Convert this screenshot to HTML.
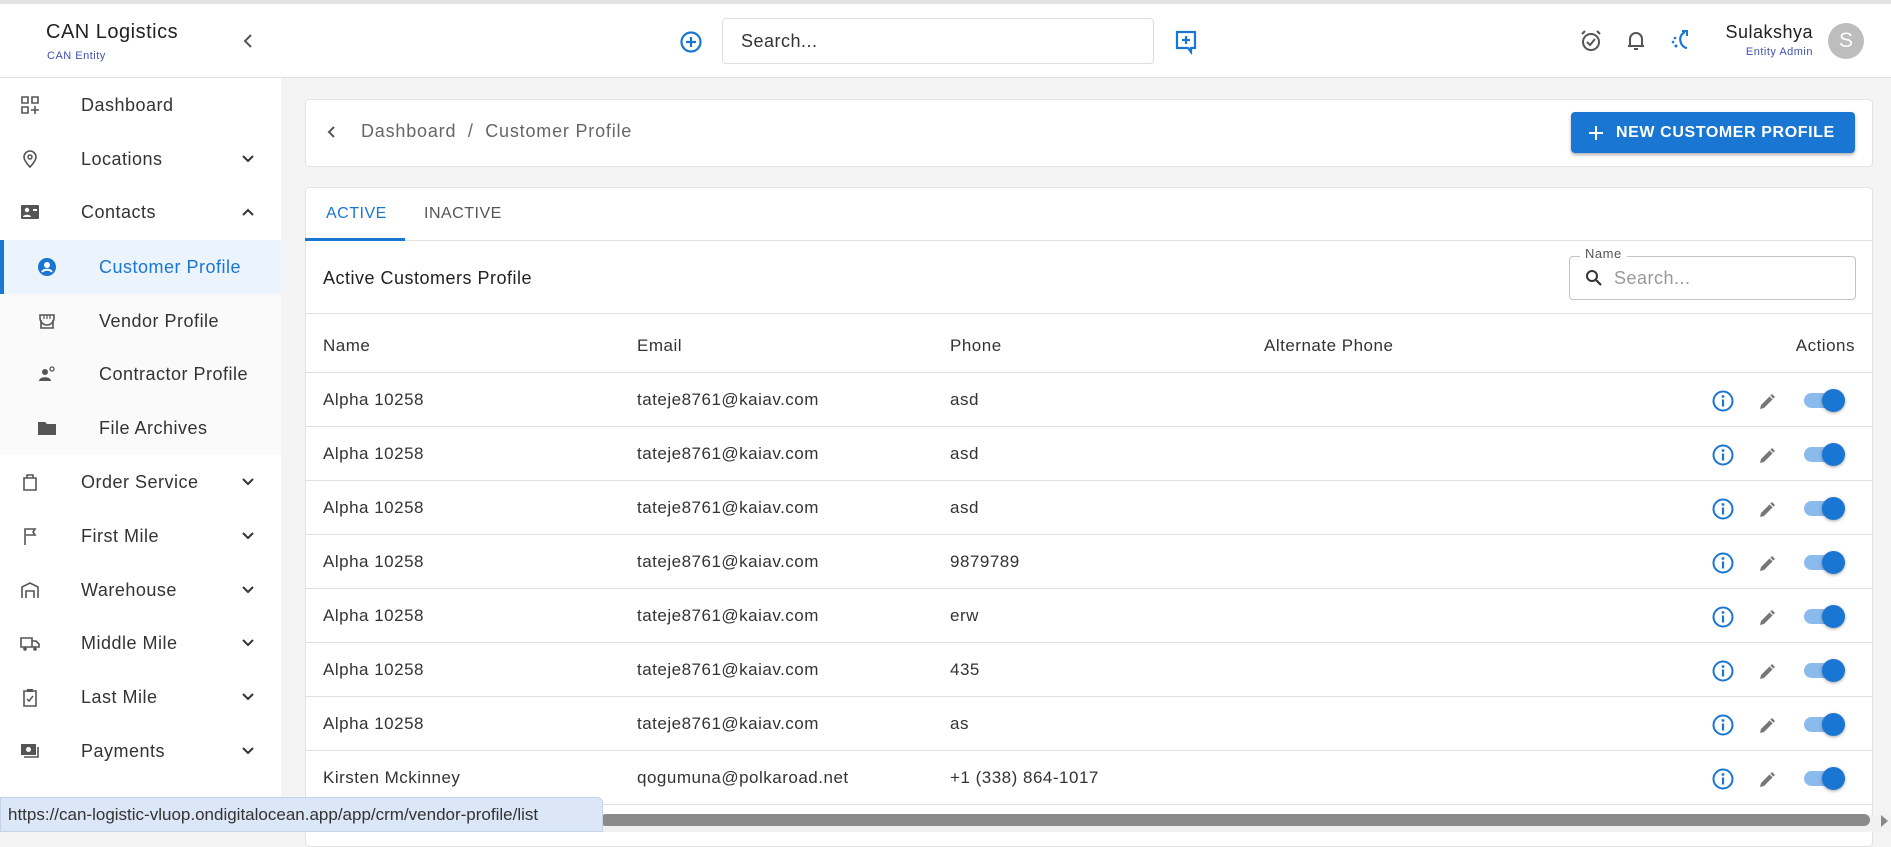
<!DOCTYPE html>
<html><head><meta charset="utf-8"><style>
*{box-sizing:border-box;margin:0;padding:0}
body{width:1891px;height:832px;overflow:hidden;background:#f4f4f4;font-family:"Liberation Sans",sans-serif;color:#222;position:relative;letter-spacing:0.5px}
.a{position:absolute}
.hdr{left:0;top:0;width:1891px;height:78px;background:#fff;border-top:4px solid #e3e3e3;border-bottom:1px solid #e0e0e0}
.side{left:0;top:78px;width:281px;height:754px;background:#fff}
.it{position:absolute;left:0;width:281px;height:54px;font-size:18px;color:#333;display:flex;align-items:center}
.it .ic{position:absolute;left:20px;top:17px;width:20px;height:20px}
.it .tx{position:absolute;left:81px}
.it.sub{background:#fafafa}
.it.sub .ic{left:37px}
.it.sub .tx{left:99px}
.it .ch{position:absolute;left:240px;top:19px}
.card{background:#fff;border:1px solid #e2e2e2;border-radius:4px}
.row{position:absolute;left:305px;width:1568px;border-bottom:1px solid #e0e0e0;height:54px;font-size:17px;color:#333}
.row span{position:absolute;top:17px}
</style></head><body>
<div class="a hdr"></div>
<div class="a" style="left:46px;top:21px;font-size:20px;color:#222">CAN Logistics</div>
<div class="a" style="left:47px;top:50px;font-size:11px;color:#3f51b5">CAN Entity</div>
<svg class="a" style="left:242px;top:33px" width="14" height="16"><path d="M9 2 L3 8 L9 14" stroke="#555" stroke-width="2" fill="none"/></svg>
<svg class="a" style="left:679px;top:30px" width="24" height="24"><circle cx="12" cy="12" r="9.5" stroke="#1976d2" stroke-width="2.2" fill="none"/><path d="M12 7v10M7 12h10" stroke="#1976d2" stroke-width="2.2"/></svg>
<div class="a" style="left:722px;top:18px;width:432px;height:46px;border:1px solid #ddd;border-radius:4px;font-size:18px;color:#333;padding:12px 0 0 18px">Search...</div>
<svg class="a" style="left:1174px;top:29px" width="24" height="26"><path d="M3 3h18v16h-4v4l-3-4H3z" stroke="#1976d2" stroke-width="2.2" fill="none"/><path d="M12 7v8M8 11h8" stroke="#1976d2" stroke-width="2.2"/></svg>
<svg class="a" style="left:1579px;top:29px" width="24" height="24"><circle cx="12" cy="13" r="8" stroke="#555" stroke-width="2" fill="none"/><path d="M8 13l3 3 5-6M3 5l3-3M21 5l-3-3" stroke="#555" stroke-width="2" fill="none"/></svg>
<svg class="a" style="left:1625px;top:29px" width="22" height="24"><path d="M5 17V10a6 6 0 0 1 12 0v7M3 17h16M9 20h4" stroke="#555" stroke-width="2" fill="none"/></svg>
<svg class="a" style="left:1668px;top:28px" width="24" height="26"><path d="M17 4c-4 2-6 6-4 11 1 3 4 5 6 5" stroke="#1976d2" stroke-width="2.2" fill="none"/><path d="M14 3h5v5" stroke="#1976d2" stroke-width="2" fill="none"/><circle cx="7" cy="10" r="1.3" fill="#1976d2"/><circle cx="5" cy="14" r="1.3" fill="#1976d2"/><circle cx="8" cy="18" r="1.5" fill="#1976d2"/></svg>
<div class="a" style="left:1690px;top:22px;width:123px;text-align:right;font-size:18px;color:#222">Sulakshya</div>
<div class="a" style="left:1690px;top:46px;width:123px;text-align:right;font-size:11px;color:#3f51b5">Entity Admin</div>
<div class="a" style="left:1828px;top:23px;width:36px;height:36px;border-radius:50%;background:#bdbdbd;color:#fff;font-size:21px;text-align:center;line-height:36px;letter-spacing:0">S</div>

<div class="a side">
<div class="it" style="top:0"><svg class="ic" viewBox="0 0 20 20"><path d="M2 2h6v6H2zM12 2h6v6h-6zM2 12h6v6H2z" stroke="#555" stroke-width="1.6" fill="none"/><path d="M15 11v8M11 15h8" stroke="#555" stroke-width="1.6"/></svg><span class="tx">Dashboard</span></div>
<div class="it" style="top:54px"><svg class="ic" viewBox="0 0 20 20"><path d="M10 18s-6-6-6-10a6 6 0 0 1 12 0c0 4-6 10-6 10z" stroke="#555" stroke-width="1.6" fill="none"/><circle cx="10" cy="8" r="2" stroke="#555" stroke-width="1.5" fill="none"/></svg><span class="tx">Locations</span><svg class="ch" width="16" height="16"><path d="M3 5l5 5 5-5" stroke="#333" stroke-width="2" fill="none"/></svg></div>
<div class="it" style="top:107px"><svg class="ic" viewBox="0 0 20 20"><rect x="1" y="3" width="18" height="14" rx="1" fill="#555"/><circle cx="7" cy="8" r="2.2" fill="#fff"/><path d="M3 15c0-3 8-3 8 0z" fill="#fff"/><path d="M13 7h4v2h-4z" fill="#fff"/></svg><span class="tx">Contacts</span><svg class="ch" width="16" height="16"><path d="M3 11l5-5 5 5" stroke="#333" stroke-width="2" fill="none"/></svg></div>
<div class="it sub" style="top:162px;background:#ebf3fd;border-left:4px solid #1976d2"><svg class="ic" viewBox="0 0 20 20" style="left:33px"><circle cx="10" cy="10" r="9" fill="#1976d2"/><circle cx="10" cy="8" r="3" fill="#fff"/><path d="M5 15c2-3 8-3 10 0" stroke="#fff" stroke-width="2" fill="none"/></svg><span class="tx" style="left:95px;color:#1976d2">Customer Profile</span></div>
<div class="it sub" style="top:216px"><svg class="ic" viewBox="0 0 20 20"><path d="M3 4h14v3a2 2 0 0 1-14 0zM4 9v8h12V9" stroke="#555" stroke-width="1.6" fill="none"/><path d="M7 4v4M10 4v4M13 4v4" stroke="#555" stroke-width="1.2"/></svg><span class="tx">Vendor Profile</span></div>
<div class="it sub" style="top:269px"><svg class="ic" viewBox="0 0 20 20"><circle cx="8" cy="8" r="3" fill="#555"/><path d="M2 17c0-5 12-5 12 0z" fill="#555"/><circle cx="15" cy="5" r="2" stroke="#555" stroke-width="1.3" fill="none"/></svg><span class="tx">Contractor Profile</span></div>
<div class="it sub" style="top:323px"><svg class="ic" viewBox="0 0 20 20"><path d="M1 4h7l2 2h9v11H1z" fill="#555"/></svg><span class="tx">File Archives</span></div>
<div class="it" style="top:377px"><svg class="ic" viewBox="0 0 20 20"><path d="M4 6h12v12H4zM7 6V3h6v3" stroke="#555" stroke-width="1.6" fill="none"/></svg><span class="tx">Order Service</span><svg class="ch" width="16" height="16"><path d="M3 5l5 5 5-5" stroke="#333" stroke-width="2" fill="none"/></svg></div>
<div class="it" style="top:431px"><svg class="ic" viewBox="0 0 20 20"><path d="M5 19V3h10l-2 3 2 3H6" stroke="#555" stroke-width="1.6" fill="none"/></svg><span class="tx">First Mile</span><svg class="ch" width="16" height="16"><path d="M3 5l5 5 5-5" stroke="#333" stroke-width="2" fill="none"/></svg></div>
<div class="it" style="top:485px"><svg class="ic" viewBox="0 0 20 20"><path d="M2 18V7l8-4 8 4v11M6 18v-7h8v7" stroke="#555" stroke-width="1.6" fill="none"/></svg><span class="tx">Warehouse</span><svg class="ch" width="16" height="16"><path d="M3 5l5 5 5-5" stroke="#333" stroke-width="2" fill="none"/></svg></div>
<div class="it" style="top:538px"><svg class="ic" viewBox="0 0 20 20"><path d="M1 5h11v9H1zM12 8h4l3 3v3h-7" stroke="#555" stroke-width="1.6" fill="none"/><circle cx="5" cy="16" r="1.8" fill="#555"/><circle cx="15" cy="16" r="1.8" fill="#555"/></svg><span class="tx">Middle Mile</span><svg class="ch" width="16" height="16"><path d="M3 5l5 5 5-5" stroke="#333" stroke-width="2" fill="none"/></svg></div>
<div class="it" style="top:592px"><svg class="ic" viewBox="0 0 20 20"><path d="M4 4h12v15H4z" stroke="#555" stroke-width="1.6" fill="none"/><path d="M7 2h6v3H7z" fill="#555"/><path d="M7 12l2 2 4-5" stroke="#555" stroke-width="1.5" fill="none"/></svg><span class="tx">Last Mile</span><svg class="ch" width="16" height="16"><path d="M3 5l5 5 5-5" stroke="#333" stroke-width="2" fill="none"/></svg></div>
<div class="it" style="top:646px"><svg class="ic" viewBox="0 0 20 20"><rect x="1" y="3" width="15" height="11" fill="#555"/><circle cx="8.5" cy="8.5" r="2.5" fill="#fff"/><path d="M18 6v10H4" stroke="#555" stroke-width="1.6" fill="none"/></svg><span class="tx">Payments</span><svg class="ch" width="16" height="16"><path d="M3 5l5 5 5-5" stroke="#333" stroke-width="2" fill="none"/></svg></div>
</div>

<div class="a card" style="left:305px;top:99px;width:1568px;height:68px"></div>
<svg class="a" style="left:326px;top:124px" width="12" height="16"><path d="M8 3L3 8l5 5" stroke="#555" stroke-width="2" fill="none"/></svg>
<div class="a" style="left:361px;top:121px;font-size:18px;color:#666;letter-spacing:0.8px">Dashboard &nbsp;/ &nbsp;Customer Profile</div>
<div class="a" style="left:1571px;top:112px;width:284px;height:41px;background:#1976d2;border-radius:4px;box-shadow:0 2px 3px rgba(0,0,0,.3);color:#fff;font-size:16px;font-weight:bold;padding:12px 0 0 45px;letter-spacing:0.6px">NEW CUSTOMER PROFILE</div>
<svg class="a" style="left:1587px;top:124px" width="18" height="18"><path d="M9 2v14M2 9h14" stroke="#fff" stroke-width="2"/></svg>

<div class="a card" style="left:305px;top:187px;width:1568px;height:660px"></div>
<div class="a" style="left:306px;top:240px;width:1566px;height:1px;background:#e0e0e0"></div>
<div class="a" style="left:305px;top:238px;width:100px;height:3px;background:#1976d2"></div>
<div class="a" style="left:326px;top:205px;font-size:16px;color:#1976d2">ACTIVE</div>
<div class="a" style="left:424px;top:205px;font-size:16px;color:#555">INACTIVE</div>
<div class="a" style="left:323px;top:268px;font-size:18px;color:#222">Active Customers Profile</div>
<div class="a" style="left:1569px;top:256px;width:287px;height:44px;border:1px solid #c4c4c4;border-radius:4px"></div>
<div class="a" style="left:1580px;top:246px;background:#fff;padding:0 5px;font-size:13px;color:#555">Name</div>
<svg class="a" style="left:1584px;top:268px" width="20" height="20"><circle cx="8" cy="8" r="5" stroke="#333" stroke-width="2" fill="none"/><path d="M12 12l5 5" stroke="#333" stroke-width="2.2"/></svg>
<div class="a" style="left:1614px;top:268px;font-size:18px;color:#999">Search...</div>

<div class="a" style="left:306px;top:313px;width:1566px;height:1px;background:#e0e0e0"></div>
<div class="row" style="top:319px"><span style="left:18px">Name</span><span style="left:332px">Email</span><span style="left:645px">Phone</span><span style="left:959px">Alternate Phone</span><span style="right:18px">Actions</span></div>

<div id="rows"></div>
<script>
var d=[["Alpha 10258","tateje8761@kaiav.com","asd"],["Alpha 10258","tateje8761@kaiav.com","asd"],["Alpha 10258","tateje8761@kaiav.com","asd"],["Alpha 10258","tateje8761@kaiav.com","9879789"],["Alpha 10258","tateje8761@kaiav.com","erw"],["Alpha 10258","tateje8761@kaiav.com","435"],["Alpha 10258","tateje8761@kaiav.com","as"],["Kirsten Mckinney","qogumuna@polkaroad.net","+1 (338) 864-1017"]];
var h="";
d.forEach(function(r,i){var t=373+i*54;
h+='<div class="row" style="top:'+t+'px"><span style="left:18px">'+r[0]+'</span><span style="left:332px">'+r[1]+'</span><span style="left:645px">'+r[2]+'</span>'+
'<svg style="position:absolute;left:1406px;top:16px" width="24" height="24"><circle cx="12" cy="12" r="9.5" stroke="#1976d2" stroke-width="2" fill="none"/><circle cx="12" cy="7.5" r="1.4" fill="#1976d2"/><path d="M12 10.5v7" stroke="#1976d2" stroke-width="2.2"/></svg>'+
'<svg style="position:absolute;left:1451px;top:16px" width="24" height="24"><path d="M4 20l1-4L16 5l3 3L8 19z" fill="#777"/><path d="M14 7l3 3" stroke="#fff" stroke-width="1.2"/></svg>'+
'<div style="position:absolute;left:1499px;top:20px;width:34px;height:15px;border-radius:8px;background:#8bbbec"></div>'+
'<div style="position:absolute;left:1517px;top:16px;width:23px;height:23px;border-radius:50%;background:#1976d2;box-shadow:0 1px 3px rgba(0,0,0,.35)"></div></div>';});
document.getElementById("rows").innerHTML=h;
</script>

<div class="a" style="left:0;top:815px;width:1891px;height:17px;background:#f1f1f1"></div>
<div class="a" style="left:600px;top:814px;width:1270px;height:12px;border-radius:6px;background:#8a8a8a"></div>
<svg class="a" style="left:1878px;top:813px" width="12" height="16"><path d="M3 2l7 6-7 6z" fill="#888"/></svg>
<div class="a" style="left:0;top:797px;width:603px;height:35px;background:#dbe6f7;border:1px solid #c5d3ea;border-radius:0 6px 0 0;font-size:17px;color:#333;padding:7px 0 0 7px;letter-spacing:0">https://can-logistic-vluop.ondigitalocean.app/app/crm/vendor-profile/list</div>
</body></html>
